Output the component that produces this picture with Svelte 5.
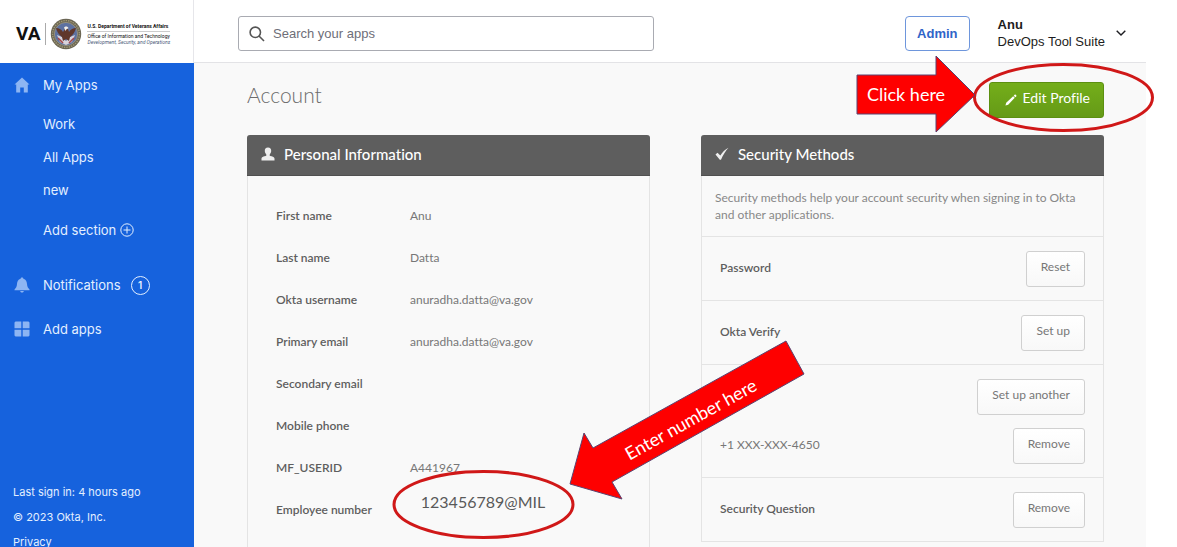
<script lang="ts">
	interface Method {
		label: string;
		entries: Array<{ name: string; action: string; strong: boolean }>;
	}

	const SECTIONS = ['Work', 'All Apps', 'new'];

	const PROFILE = [
		{ label: 'First name', value: 'Anu' },
		{ label: 'Last name', value: 'Datta' },
		{ label: 'Okta username', value: 'anuradha.datta@va.gov' },
		{ label: 'Primary email', value: 'anuradha.datta@va.gov' },
		{ label: 'Secondary email', value: '' },
		{ label: 'Mobile phone', value: '' },
		{ label: 'MF_USERID', value: 'A441967' }
	];

	const METHODS: Method[] = [
		{ label: 'password', entries: [{ name: 'Password', action: 'Reset', strong: true }] },
		{ label: 'verify', entries: [{ name: 'Okta Verify', action: 'Set up', strong: true }] },
		{
			label: 'phone',
			entries: [
				{ name: '', action: 'Set up another', strong: true },
				{ name: '+1 XXX-XXX-4650', action: 'Remove', strong: false }
			]
		},
		{ label: 'question', entries: [{ name: 'Security Question', action: 'Remove', strong: true }] }
	];

	let query = $state('');
</script>

<div class="shell">
	<aside class="sidebar">
		<a class="brand" href="#home">
			<span class="va">VA</span>
			<svg class="seal" viewBox="0 0 32 32" aria-hidden="true">
				<circle cx="16" cy="16" r="15.2" fill="#6b6654" />
				<circle cx="16" cy="16" r="13.4" fill="none" stroke="#a39a76" stroke-width="1.4" stroke-dasharray="1.4 1" />
				<circle cx="16" cy="16" r="11.6" fill="#5d71a0" stroke="#b5a67a" stroke-width=".6" />
				<path d="M7 17l3 7 6 3 6-3 3-7-5 2-4 4-4-4z" fill="#d9d4dc" />
				<path d="M8 20l5 5M24 20l-5 5" stroke="#a3474c" stroke-width="1.6" />
				<path d="M6 10c3 0 5 1 7 4l2-3 3 0 1 3c2-3 4-4 7-4-1 4-3 7-6 9l-1 4-3-2-3 2-1-4c-3-2-5-5-6-9z" fill="#60372b" />
				<path d="M14 9.500c1-1.600 4-1.600 4.500.8l-1.800.7-1.200 2z" fill="#f3eee8" />
			</svg>
			<span class="dept">
				<strong>U.S. Department of Veterans Affairs</strong>
				<span>Office of Information and Technology</span>
				<em>Development, Security, and Operations</em>
			</span>
		</a>

		<nav class="nav" aria-label="Main">
			<a class="item" href="#apps">
				<svg viewBox="0 0 16 16" aria-hidden="true"><path d="M8 .5L.5 7.500h1.700V15.500h4V10.500h3.600v5h4V7.500h1.700z" /></svg>
				My Apps
			</a>
			<div class="sections">
				{#each SECTIONS as section (section)}
					<a href="#{section}">{section}</a>
				{/each}
			</div>
			<button type="button" class="add">
				Add section
				<svg viewBox="0 0 14 14" aria-hidden="true"><circle cx="7" cy="7" r="6.200" /><path d="M7 3.500v7M3.500 7h7" /></svg>
			</button>
			<a class="item notifications" href="#notifications">
				<svg viewBox="0 0 16 16" aria-hidden="true"><path d="M8 .5c.9 0 1.300.5 1.400 1.200C12 2.500 12.800 4.500 13 7c.2 2.800 1 3.800 2.500 5.500v.7H.5v-.7C2 10.800 2.800 9.800 3 7c.2-2.500 1-4.500 3.600-5.300C6.700 1 7.100.5 8 .5zM6.200 14h3.600c-.2 1-.9 1.500-1.800 1.500S6.400 15 6.200 14z" /></svg>
				Notifications
				<span class="count">1</span>
			</a>
			<a class="item" href="#add">
				<svg viewBox="0 0 16 16" aria-hidden="true"><path d="M1.500.5h5.800v6.800H.5V1.500zM8.700.5h5.800l1 1v5.800H8.700zM.5 8.700h6.800v6.800H1.500l-1-1zM8.700 8.700h6.800v5.800l-1 1H8.700z" /></svg>
				Add apps
			</a>
		</nav>

		<footer>
			<span>Last sign in: 4 hours ago</span>
			<span>© 2023 Okta, Inc.</span>
			<a href="#privacy">Privacy</a>
		</footer>
	</aside>

	<div class="page">
		<header class="topbar">
			<label class="search">
				<svg viewBox="0 0 16 16" aria-hidden="true"><circle cx="6.300" cy="6.300" r="5.200" /><path d="M10 10l5 5" /></svg>
				<input type="search" placeholder="Search your apps" aria-label="Search your apps" bind:value={query} />
			</label>
			<button type="button" class="admin">Admin</button>
			<button type="button" class="user">
				<span class="who">
					<strong>Anu</strong>
					<span>DevOps Tool Suite</span>
				</span>
				<svg viewBox="0 0 10 6" aria-hidden="true"><path d="M.7.7L5 5 9.300.7" /></svg>
			</button>
		</header>

		<main>
			<div class="title">
				<h1>Account</h1>
				<div class="edit-wrap">
					<button type="button" class="edit">
						<svg viewBox="0 0 14 14" aria-hidden="true"><path d="M.5 13.500l.9-3.200L9.500 2.600l1.900 1.900L3.700 12.600zM10.200 1.900l1-1c.4-.4.9-.4 1.300 0l.6.6c.4.4.4.9 0 1.300l-1 1z" /></svg>
						Edit Profile
					</button>
					<svg class="callout click" viewBox="0 0 304 82">
						<ellipse cx="209.500" cy="44.500" rx="89" ry="33" />
						<polygon points="3,22 82,22 82,3 121,42 82,79 82,61 3,61" />
						<text x="52" y="48" text-anchor="middle">Click here</text>
					</svg>
				</div>
			</div>

			<div class="columns">
				<section class="card">
					<h2>
						<svg viewBox="0 0 14 14" aria-hidden="true"><path d="M7 .5c2.300 0 3.300 1.500 3.200 3.500-.1 1.700-.9 2.600-1.500 3.500v1.300c1.800.5 4.800.9 4.800 3v1.700H.5v-1.700c0-2.100 3-2.500 4.800-3V7.500C4.700 6.600 3.900 5.700 3.800 4 3.700 2 4.700.5 7 .5z" /></svg>
						Personal Information
					</h2>
					<dl>
						{#each PROFILE as field (field.label)}
							<div class="field">
								<dt>{field.label}</dt>
								<dd>{field.value}</dd>
							</div>
						{/each}
						<div class="field">
							<dt>Employee number</dt>
							<dd>
								<svg class="callout number" viewBox="0 0 420 206">
									<ellipse cx="93.500" cy="168.500" rx="89.500" ry="33" />
									<text class="value" x="93" y="172" text-anchor="middle">123456789@MIL</text>
									<polygon points="396,5 414,38 222,146 232,163 180,148 194,97 203,112" />
									<text x="304" y="89" text-anchor="middle" transform="rotate(-29 304 89)">Enter number here</text>
								</svg>
							</dd>
						</div>
					</dl>
				</section>

				<section class="card security">
					<h2>
						<svg viewBox="0 0 14 14" aria-hidden="true"><path d="M.5 7.500l2-1.700 2.800 2.700C7.300 5.300 10 2.500 13.500.8 10.500 4 8 8 6 12.800H4.800z" /></svg>
						Security Methods
					</h2>
					<p>Security methods help your account security when signing in to Okta and other applications.</p>
					{#each METHODS as method (method.label)}
						<div class="method">
							{#each method.entries as entry (entry.name)}
								<div class="entry">
									<span class:strong={entry.strong}>{entry.name}</span>
									<button type="button">{entry.action}</button>
								</div>
							{/each}
						</div>
					{/each}
				</section>
			</div>
		</main>
	</div>
</div>

<style>
	:global(body) {
		overflow: hidden;
		background: #fff;
	}
	.shell {
		display: grid;
		grid-template-columns: 194px minmax(0, 1fr);
		height: 100vh;
		padding-right: 31px;
		font-family: Inter, 'Liberation Sans', sans-serif;
		font-size: 13px;
	}
	a {
		color: inherit;
		text-decoration: none;
	}
	button {
		font: inherit;
		cursor: pointer;
	}

	/* sidebar */
	.sidebar {
		display: flex;
		flex-direction: column;
		height: 100vh;
		overflow: hidden;
		background: #1662dd;
		color: #e3efff;
	}
	.brand {
		display: flex;
		flex: none;
		align-items: center;
		box-sizing: border-box;
		height: 63px;
		padding: 4px 0 0 16px;
		background: #fff;
		border-right: 1px solid #e6e6ea;
		color: #111;
	}
	.va {
		padding-right: 5px;
		border-right: 1px solid #aaa;
		font: 700 19px/22px Roboto, sans-serif;
	}
	.seal {
		flex: none;
		width: 32px;
		height: 32px;
		margin: 0 5px 0 4px;
	}
	.dept {
		display: flex;
		flex-direction: column;
		font-family: Roboto, sans-serif;
		font-size: 5px;
		line-height: 6px;
		white-space: nowrap;
	}
	.dept strong {
		margin-bottom: 1px;
		padding-bottom: 2px;
		border-bottom: 1px solid #ccc;
	}
	.dept em {
		color: #4a5a78;
	}
	.nav {
		display: flex;
		flex-direction: column;
		padding: 7px 14px 0;
		line-height: 30px;
	}
	.item {
		display: flex;
		align-items: center;
	}
	.item svg {
		width: 16px;
		height: 16px;
		margin-right: 13px;
		fill: #8db5f3;
	}
	.sections {
		display: flex;
		flex-direction: column;
		margin: 8px 0 0 29px;
		line-height: 33px;
	}
	.add {
		display: flex;
		align-items: center;
		gap: 4px;
		margin: 8px 0 0 29px;
		padding: 0;
		background: none;
		border: 0;
		color: inherit;
		line-height: 30px;
	}
	.add svg {
		width: 14px;
		height: 14px;
		fill: none;
		stroke: #e3efff;
	}
	.notifications {
		margin: 25px 0 14px;
	}
	.count {
		box-sizing: border-box;
		width: 19px;
		height: 19px;
		margin-left: 10px;
		border: 1px solid #e3efff;
		border-radius: 50%;
		font-size: 10px;
		font-weight: 600;
		line-height: 17px;
		text-align: center;
	}
	footer {
		display: flex;
		flex: none;
		flex-direction: column;
		gap: 15px;
		margin: 143px 0 0 13px;
		font-size: 11px;
		line-height: 10px;
	}

	/* top bar */
	.page {
		min-width: 0;
		display: flex;
		flex-direction: column;
	}
	.topbar {
		display: flex;
		align-items: flex-start;
		box-sizing: border-box;
		height: 63px;
		padding: 16px 20px 0 44px;
		border-bottom: 1px solid #e3e3e6;
		font-family: 'Liberation Sans', Arial, sans-serif;
	}
	.search {
		display: flex;
		flex: 0 1 416px;
		align-items: center;
		gap: 8px;
		box-sizing: border-box;
		height: 35px;
		margin-right: auto;
		padding: 0 10px;
		border: 1px solid #a9abb2;
		border-radius: 3px;
	}
	.search svg {
		width: 16px;
		height: 16px;
		fill: none;
		stroke: #555;
		stroke-width: 1.6;
	}
	.search input {
		flex: 1;
		min-width: 0;
		padding: 0;
		background: none;
		border: 0;
		outline: 0;
		font: inherit;
	}
	.search input::placeholder {
		color: #6e6e78;
	}
	.admin {
		height: 35px;
		margin-right: 28px;
		padding: 0 11px;
		background: #fff;
		border: 1px solid #6e96dc;
		border-radius: 4px;
		color: #3064c8;
		font-weight: 600;
	}
	.user {
		display: flex;
		align-items: center;
		gap: 11px;
		padding: 0;
		background: none;
		border: 0;
		color: #1d1d21;
		line-height: 17px;
		text-align: left;
	}
	.who {
		display: flex;
		flex-direction: column;
	}
	.who strong {
		font-weight: 600;
	}
	.user svg {
		width: 10px;
		height: 6px;
		fill: none;
		stroke: #1d1d21;
		stroke-width: 1.4;
	}

	/* account page */
	main {
		flex: 1;
		padding: 19px 42px 0 53px;
		background: #f9f9f9;
		font-family: Lato, 'Open Sans', sans-serif;
		font-size: 12px;
		font-variant-ligatures: none;
	}
	.title {
		display: flex;
		justify-content: space-between;
		align-items: flex-start;
		height: 53px;
	}
	h1 {
		margin: 0;
		color: #6c6c6c;
		font-size: 21px;
		font-weight: 300;
		line-height: 26px;
	}
	.edit-wrap {
		position: relative;
	}
	.edit {
		display: flex;
		align-items: center;
		gap: 6px;
		height: 36px;
		padding: 0 13px 6px 15px;
		background: linear-gradient(#74ae1a, #659a17);
		border: 1px solid #5c9011;
		border-radius: 3px;
		color: #fff;
		font-size: 14px;
	}
	.edit svg {
		width: 12px;
		height: 12px;
		margin-top: 6px;
		fill: #fff;
	}
	.columns {
		display: grid;
		grid-template-columns: 1fr 1fr;
		gap: 51px;
		align-items: start;
	}
	.card {
		border: 1px solid #e4e4e4;
		border-top: 0;
		border-radius: 3px 3px 0 0;
		color: #777;
	}
	h2 {
		display: flex;
		align-items: center;
		gap: 9px;
		box-sizing: border-box;
		height: 41px;
		margin: 0 -1px;
		padding: 0 14px 2px;
		background: #5e5e5e;
		border-bottom: 1px solid #505050;
		border-radius: 3px 3px 0 0;
		color: #fff;
		font-size: 15px;
		font-weight: 500;
	}
	h2 svg {
		width: 14px;
		height: 14px;
		fill: #eee;
	}
	dl {
		margin: 0;
		padding: 19px 28px;
	}
	.field {
		display: grid;
		grid-template-columns: 134px 1fr;
		height: 42px;
		line-height: 42px;
	}
	dt,
	.strong {
		color: #5e5e5e;
		font-weight: 600;
	}
	dd {
		position: relative;
		margin: 0;
	}
	p {
		margin: 0;
		padding: 13px;
		color: #888;
		line-height: 17px;
	}
	.security {
		border-bottom: 1px solid #e4e4e4;
	}
	.method {
		display: flex;
		flex-direction: column;
		gap: 13px;
		padding: 14px 18px 13px;
		border-top: 1px solid #e4e4e4;
	}
	.entry {
		display: flex;
		justify-content: space-between;
		align-items: center;
	}
	.entry span {
		padding-bottom: 3px;
	}
	.entry button {
		height: 36px;
		padding: 0 14px 5px;
		background: linear-gradient(#fff, #f8f8f8);
		border: 1px solid #d0d0d0;
		border-radius: 3px;
		color: #777;
	}

	/* callouts drawn over the page */
	.callout {
		position: absolute;
		z-index: 1;
		pointer-events: none;
	}
	.callout ellipse {
		fill: none;
		stroke: #d01818;
		stroke-width: 3;
	}
	.callout polygon {
		fill: #fe0000;
		stroke: #5a4370;
		stroke-width: 1;
	}
	.callout text {
		fill: #fff;
		font-size: 18px;
	}
	.callout .value {
		fill: #595959;
		font-size: 16px;
	}
	.click {
		top: -29px;
		left: -135px;
		width: 304px;
		height: 82px;
	}
	.number {
		top: -153px;
		left: -20px;
		width: 420px;
		height: 206px;
	}
</style>
